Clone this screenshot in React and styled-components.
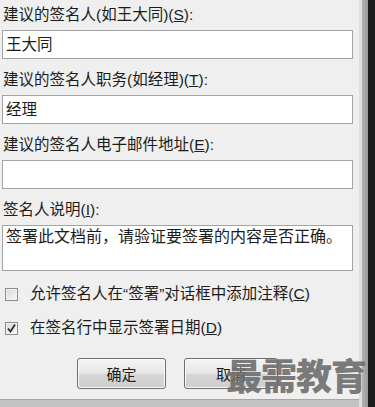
import React from "react";
import styled, { createGlobalStyle } from "styled-components";

const GlobalStyle = createGlobalStyle`
  html, body {
    margin: 0;
    padding: 0;
    background: #efefef;
  }
  * {
    box-sizing: border-box;
  }
`;

const fields = [
  { label: "建议的签名人(如王大同)", key: "S", value: "王大同" },
  { label: "建议的签名人职务(如经理)", key: "T", value: "经理" },
  { label: "建议的签名人电子邮件地址", key: "E", value: "" },
];

const App = () => {
  return (
    <Page>
      <GlobalStyle />
      <Panel>
        <Body>
          {fields.map((f) => (
            <Field key={f.key}>
              <Label>
                {f.label}(<u>{f.key}</u>):
              </Label>
              <TextBox>{f.value}</TextBox>
            </Field>
          ))}
          <Field>
            <Label>
              签名人说明(<u>I</u>):
            </Label>
            <TextArea>签署此文档前，请验证要签署的内容是否正确。</TextArea>
          </Field>
          <Checks>
            <CheckRow>
              <Box />
              <CheckText>
                允许签名人在“签署”对话框中添加注释(<u>C</u>)
              </CheckText>
            </CheckRow>
            <CheckRow>
              <Box checked>
                <svg width="11" height="11" viewBox="0 0 11 11">
                  <path
                    d="M2 5.5 L4.5 8.5 L9 1.5"
                    fill="none"
                    stroke="#2a2a2a"
                    strokeWidth="1.8"
                  />
                </svg>
              </Box>
              <CheckText>
                在签名行中显示签署日期(<u>D</u>)
              </CheckText>
            </CheckRow>
          </Checks>
          <Buttons>
            <Button $width={89}>确定</Button>
            <Button $width={94}>取消</Button>
          </Buttons>
        </Body>
        <BottomBand />
      </Panel>
      <Edge />
      <Watermark>最需教育</Watermark>
    </Page>
  );
};

export default App;

const Page = styled.div`
  position: relative;
  display: flex;
  width: 375px;
  height: 407px;
  overflow: hidden;
  font-family: "Liberation Sans", "Noto Sans CJK SC", sans-serif;
  font-size: 15.5px;
  color: #1c1c1c;
`;

const Panel = styled.div`
  flex: 1;
  display: flex;
  flex-direction: column;
  background: #efefef;
`;

const Body = styled.div`
  display: flex;
  flex-direction: column;
  gap: 11px;
  padding: 5px 6px 0 2px;
`;

const Field = styled.div`
  display: flex;
  flex-direction: column;
  gap: 5px;
`;

const Label = styled.div`
  line-height: 20px;
  padding-left: 1px;
  white-space: nowrap;
`;

const TextBox = styled.div`
  height: 29px;
  background: #fff;
  border: 1px solid #a4a4a4;
  padding: 0 3px;
  line-height: 27px;
`;

const TextArea = styled(TextBox)`
  height: 46px;
  padding-top: 1px;
  line-height: 20px;
  font-size: 16px;
`;

const Checks = styled.div`
  display: flex;
  flex-direction: column;
  gap: 14px;
  margin-top: 2px;
`;

const CheckRow = styled.div`
  display: flex;
  align-items: center;
  gap: 12px;
  height: 20px;
  padding-left: 3px;
`;

const Box = styled.div`
  width: 13px;
  height: 13px;
  display: flex;
  align-items: center;
  justify-content: center;
  border: 1px solid #8c8c8c;
  background: linear-gradient(135deg, #d8d8d8, #f6f6f6);
  box-shadow: inset 0 0 0 1px #f4f4f4;
`;

const CheckText = styled.span`
  line-height: 20px;
  white-space: nowrap;
`;

const Buttons = styled.div`
  display: flex;
  gap: 18px;
  padding-left: 75px;
  margin-top: 9px;
`;

const Button = styled.div`
  width: ${(p) => p.$width}px;
  height: 31px;
  display: flex;
  align-items: center;
  justify-content: center;
  border: 1px solid #6e6e6e;
  border-radius: 3px;
  background: linear-gradient(#f4f4f4, #e6e6e6 50%, #d6d6d6 51%, #cfcfcf);
  box-shadow: inset 0 0 0 1px #fafafa;
  font-size: 15px;
`;

const BottomBand = styled.div`
  margin-top: auto;
  height: 8px;
  background: #c2c2c2;
  border-top: 1px solid #a6a6a6;
`;

const Edge = styled.div`
  width: 16px;
  background: linear-gradient(
    to right,
    #dedede 0 3px,
    #b4b4b4 3px,
    #989898 9px,
    #1c1c1c 9px
  );
`;

const Watermark = styled.div`
  position: absolute;
  left: 226px;
  top: 356px;
  font-family: "Noto Sans CJK SC", sans-serif;
  font-weight: 900;
  font-size: 36px;
  line-height: 36px;
  color: rgba(110, 110, 110, 0.92);
  letter-spacing: -1px;
  white-space: nowrap;
`;
